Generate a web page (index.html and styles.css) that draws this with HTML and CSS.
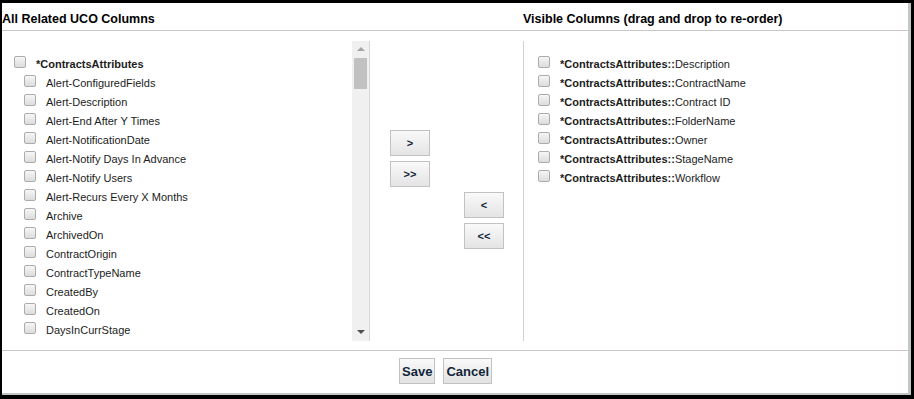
FILE: index.html
```html
<!DOCTYPE html>
<html lang="en">
<head>
  <meta charset="UTF-8" />
  <title>Column Chooser</title>
  <link rel="stylesheet" href="styles.css">
</head>
<body>
  <div class="dialog">
    <div class="head">
      <div class="head-left">All Related UCO Columns</div>
      <div class="head-right">Visible Columns (drag and drop to re-order)</div>
    </div>

    <div class="lists">
      <div class="source">
        <ul class="items">
          <li class="item group"><span class="cb"></span><b>*ContractsAttributes</b></li>
          <li class="item child"><span class="cb"></span>Alert-ConfiguredFields</li>
          <li class="item child"><span class="cb"></span>Alert-Description</li>
          <li class="item child"><span class="cb"></span>Alert-End After Y Times</li>
          <li class="item child"><span class="cb"></span>Alert-NotificationDate</li>
          <li class="item child"><span class="cb"></span>Alert-Notify Days In Advance</li>
          <li class="item child"><span class="cb"></span>Alert-Notify Users</li>
          <li class="item child"><span class="cb"></span>Alert-Recurs Every X Months</li>
          <li class="item child"><span class="cb"></span>Archive</li>
          <li class="item child"><span class="cb"></span>ArchivedOn</li>
          <li class="item child"><span class="cb"></span>ContractOrigin</li>
          <li class="item child"><span class="cb"></span>ContractTypeName</li>
          <li class="item child"><span class="cb"></span>CreatedBy</li>
          <li class="item child"><span class="cb"></span>CreatedOn</li>
          <li class="item child"><span class="cb"></span>DaysInCurrStage</li>
        </ul>
        <div class="scrollbar">
          <span class="arrow up"></span>
          <span class="thumb"></span>
          <span class="arrow down"></span>
        </div>
      </div>

      <div class="movers">
        <button type="button" class="move add">&gt;</button>
        <button type="button" class="move add">&gt;&gt;</button>
        <button type="button" class="move remove">&lt;</button>
        <button type="button" class="move remove">&lt;&lt;</button>
      </div>

      <div class="target">
        <ul class="items">
          <li class="item"><span class="cb"></span><b>*ContractsAttributes::</b>Description</li>
          <li class="item"><span class="cb"></span><b>*ContractsAttributes::</b>ContractName</li>
          <li class="item"><span class="cb"></span><b>*ContractsAttributes::</b>Contract ID</li>
          <li class="item"><span class="cb"></span><b>*ContractsAttributes::</b>FolderName</li>
          <li class="item"><span class="cb"></span><b>*ContractsAttributes::</b>Owner</li>
          <li class="item"><span class="cb"></span><b>*ContractsAttributes::</b>StageName</li>
          <li class="item"><span class="cb"></span><b>*ContractsAttributes::</b>Workflow</li>
        </ul>
      </div>
    </div>

    <div class="foot">
      <button type="button" class="action">Save</button>
      <button type="button" class="action">Cancel</button>
    </div>
  </div>
</body>
</html>
```

FILE: styles.css
```css
:root {
  --line: #c8c8c8;
  --edge: #c3c6c6;
  --text: #1c1c1c;
  --btn-text: #12263a;
}

* {
  box-sizing: border-box;
}

body {
  margin: 0;
  padding: 3px 0 0 2px;
  background: #000;
  font-family: "Liberation Sans", Arial, sans-serif;
  color: var(--text);
}

.dialog {
  width: 909px;
  height: 392px;
  background: #fff;
  border-right: 3px solid var(--edge);
  border-bottom: 2px solid var(--edge);
}

/* header titles */
.head {
  display: flex;
  height: 28px;
  padding-top: 9px;
  border-bottom: 1px solid var(--line);
  font-weight: bold;
  font-size: 12.5px;
  line-height: 15px;
  color: #000;
}

.head-left {
  width: 521px;
}

/* the three columns */
.lists {
  display: flex;
  height: 319px;
  padding-top: 10px;
}

.source {
  display: flex;
  width: 368px;
  height: 300px;
  border-right: 1px solid #d6d6d6;
}

.source .items {
  flex: 1;
  overflow: hidden;
}

.items {
  list-style: none;
  margin: 0;
  padding: 14px 0 0 0;
  font-size: 11px;
}

.item {
  display: flex;
  align-items: flex-start;
  height: 19px;
  line-height: 19px;
  white-space: nowrap;
}

.item.group {
  padding-left: 12px;
}

.item.child {
  padding-left: 22px;
}

.cb {
  flex: none;
  width: 12px;
  height: 12px;
  margin: 1px 10px 0 0;
  border: 1px solid #acacac;
  border-radius: 2px;
  background: linear-gradient(#f6f6f6, #dcdcdc);
}

.scrollbar {
  display: flex;
  flex-direction: column;
  align-items: center;
  width: 17px;
  background: #f0f0f0;
}

.arrow {
  width: 0;
  height: 0;
  border-left: 4px solid transparent;
  border-right: 4px solid transparent;
}

.arrow.up {
  margin-top: 6px;
  border-bottom: 4px solid #a3a3a3;
}

.arrow.down {
  margin-top: auto;
  margin-bottom: 7px;
  border-top: 4px solid #505050;
}

.thumb {
  width: 13px;
  height: 31px;
  margin-top: 7px;
  background: #c1c1c1;
}

.movers {
  display: flex;
  flex-direction: column;
  align-items: flex-start;
  gap: 5px;
  width: 153px;
  padding-top: 89px;
}

.move {
  width: 40px;
  height: 26px;
  padding: 0;
  border: 1px solid #c2c2c2;
  background: linear-gradient(#f9f9f9, #e4e4e4);
  font-family: "Liberation Sans", Arial, sans-serif;
  font-weight: bold;
  font-size: 11px;
  color: var(--btn-text);
}

.move.add {
  margin-left: 20px;
}

.move.remove {
  margin-left: 94px;
}

.target {
  flex: 1;
  height: 300px;
  border-left: 1px solid #d0d0d0;
  padding-left: 14px;
}

/* save / cancel */
.foot {
  display: flex;
  gap: 8px;
  height: 43px;
  padding: 7px 0 0 397px;
  border-top: 1px solid var(--line);
}

.action {
  height: 26px;
  padding: 0 2px;
  border: 1px solid #c2c2c2;
  background: linear-gradient(#fafafa, #e2e2e2);
  font-family: "Liberation Sans", Arial, sans-serif;
  font-weight: bold;
  font-size: 13px;
  color: var(--btn-text);
}
```
